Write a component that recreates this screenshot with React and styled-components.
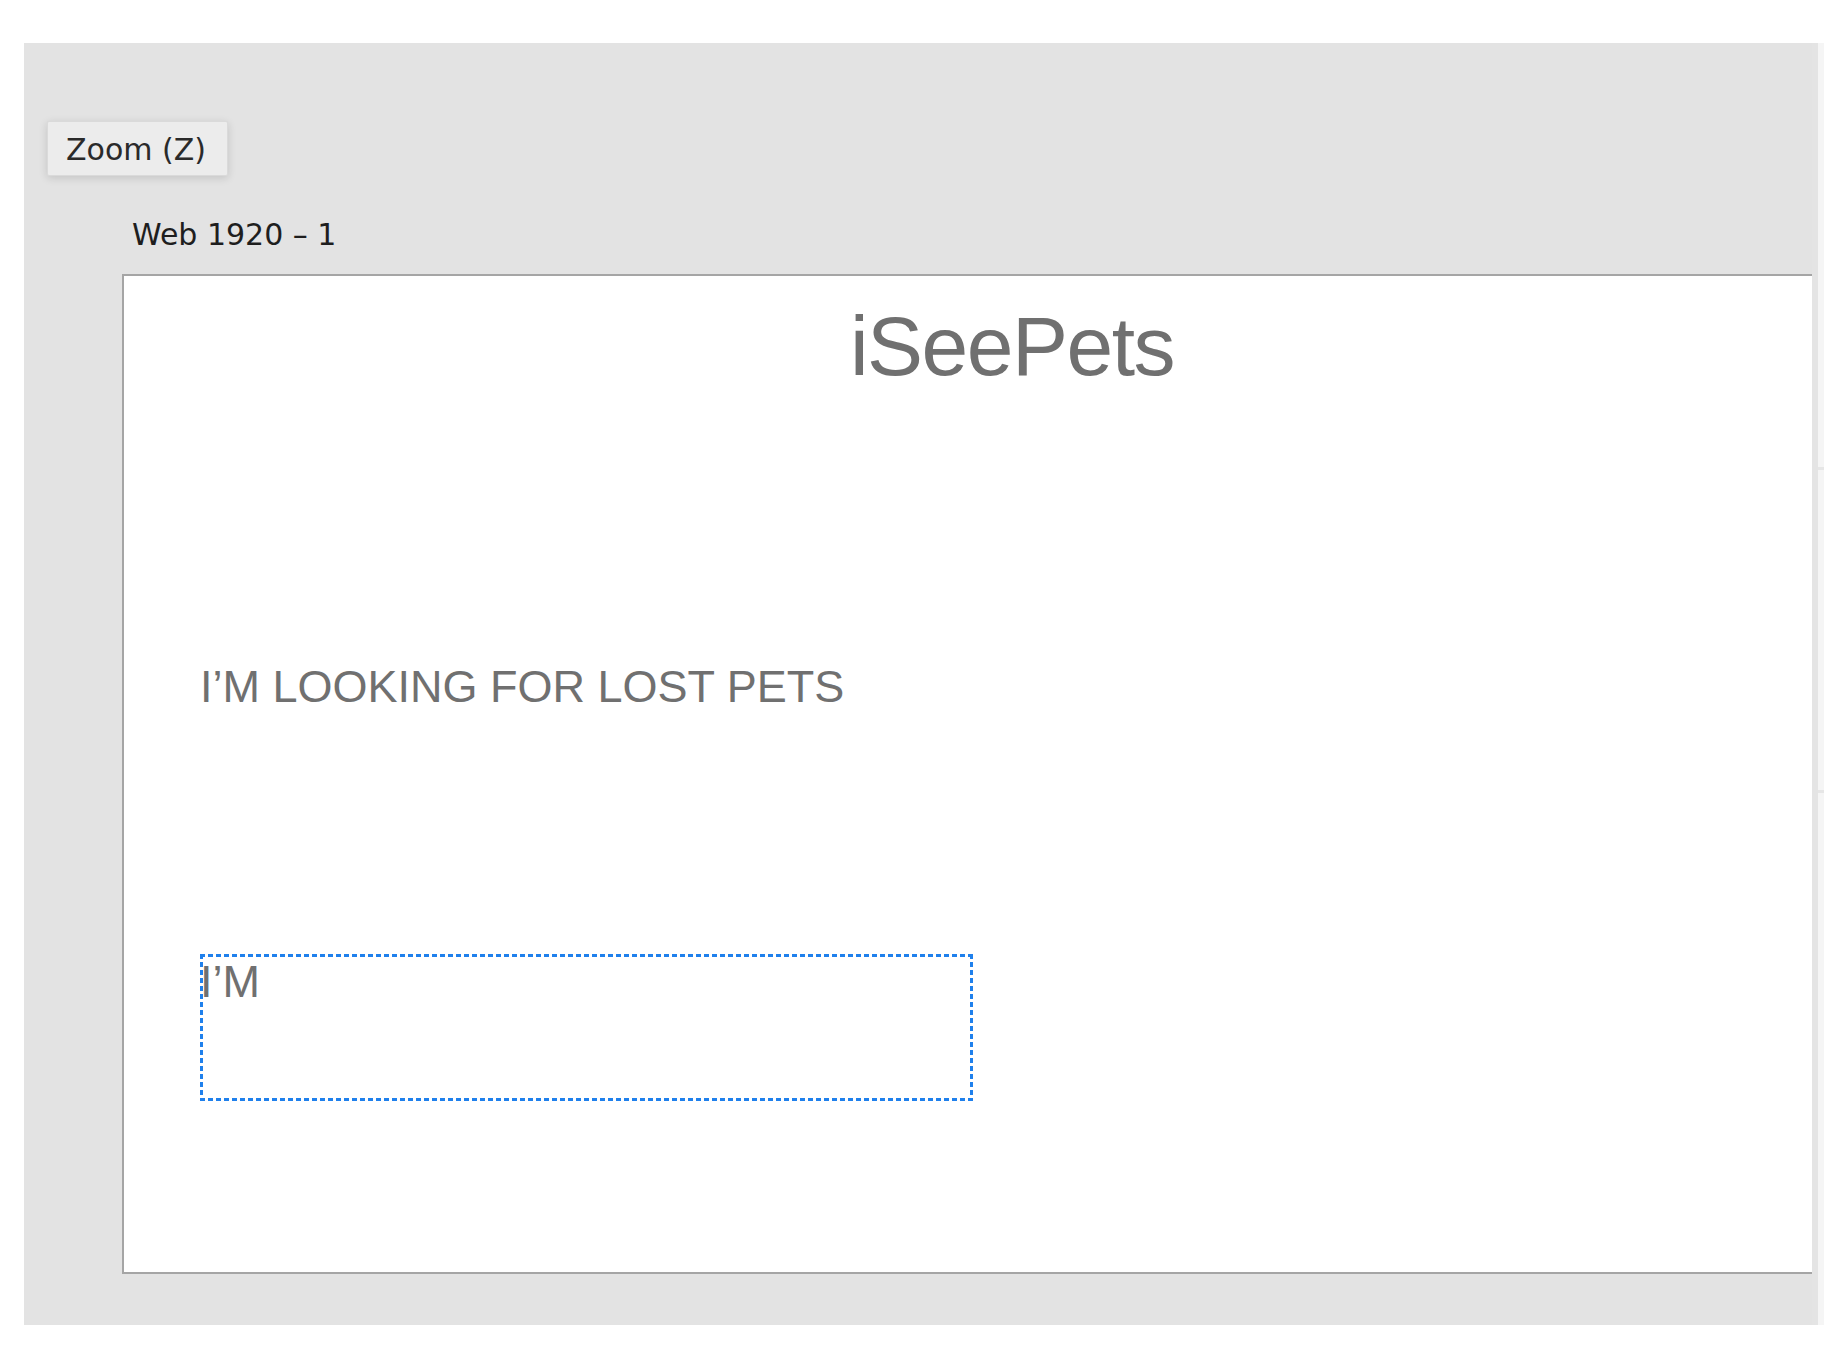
import React from 'react';
import styled, { createGlobalStyle } from 'styled-components';

const GlobalStyle = createGlobalStyle`
    html, body {
        margin: 0;
        padding: 0;
        background: #ffffff;
    }
    * {
        box-sizing: border-box;
    }
`;

function App() {
    return (
        <React.Fragment>
            <GlobalStyle />
            <Page>
                <Canvas>
                    <ZoomButton>Zoom (Z)</ZoomButton>
                    <ArtboardLabel>Web 1920 – 1</ArtboardLabel>
                    <Artboard>
                        <BrandTitle>iSeePets</BrandTitle>
                        <SectionTitle>I’M LOOKING FOR LOST PETS</SectionTitle>
                        <TextEditBox>
                            <EditText>I’M</EditText>
                        </TextEditBox>
                    </Artboard>
                </Canvas>
                <CanvasEdge />
                <ScrollTrack>
                    <ScrollMark $top={424} />
                    <ScrollMark $top={320} />
                </ScrollTrack>
            </Page>
        </React.Fragment>
    );
}

export default App;

const Page = styled.div`
    display: flex;
    align-items: flex-start;
    padding: 43px 0 0 24px;
    height: 1358px;
`;

const Canvas = styled.div`
    display: flex;
    flex-direction: column;
    align-items: flex-start;
    width: 1788px;
    height: 1282px;
    padding: 78px 0 0 23px;
    background: #e3e3e3;
    overflow: hidden;
`;

const CanvasEdge = styled.div`
    width: 6px;
    height: 1282px;
    background: #e4e4e4;
`;

const ScrollTrack = styled.div`
    display: flex;
    flex-direction: column;
    width: 6px;
    height: 1282px;
    background: #f5f5f5;
`;

const ScrollMark = styled.div`
    margin-top: ${(props) => props.$top}px;
    height: 3px;
    background: #e6e6e6;
`;

const ZoomButton = styled.div`
    display: flex;
    align-items: center;
    width: 181px;
    height: 55px;
    padding: 2px 0 0 18px;
    background: #ececec;
    border: 1px solid #dadada;
    border-radius: 2px;
    box-shadow: 0 2px 8px rgba(0, 0, 0, 0.14);
    font-family: "DejaVu Sans", sans-serif;
    font-size: 30px;
    color: #2a2a2a;
`;

const ArtboardLabel = styled.div`
    margin: 44px 0 0 85px;
    font-family: "DejaVu Sans", sans-serif;
    font-size: 30px;
    line-height: 29px;
    color: #1e1e1e;
`;

const Artboard = styled.div`
    display: flex;
    flex-direction: column;
    flex-shrink: 0;
    width: 1778px;
    height: 1000px;
    margin: 25px 0 0 75px;
    padding: 28px 0 0 76px;
    background: #ffffff;
    border: 2px solid #a5a5a5;
    border-right: none;
    font-family: "Liberation Sans", Arial, sans-serif;
    color: #707070;
`;

const BrandTitle = styled.h1`
    margin: 0 0 0 -76px;
    font-size: 84px;
    font-weight: 400;
    line-height: 1;
    letter-spacing: -1.5px;
    text-align: center;
`;

const SectionTitle = styled.h2`
    margin: 276px 0 0 0;
    font-size: 45px;
    font-weight: 400;
    line-height: 1;
`;

const TextEditBox = styled.div`
    width: 773px;
    height: 147px;
    margin-top: 245px;
    padding-top: 5px;
    background:
        linear-gradient(to right, #1f80ec 62%, transparent 0) top left / 8px 3px repeat-x,
        linear-gradient(to right, #1f80ec 62%, transparent 0) bottom left / 8px 3px repeat-x,
        linear-gradient(to bottom, #1f80ec 62%, transparent 0) top left / 3px 8px repeat-y,
        linear-gradient(to bottom, #1f80ec 62%, transparent 0) top right / 3px 8px repeat-y;
`;

const EditText = styled.div`
    font-size: 45px;
    line-height: 1;
`;
